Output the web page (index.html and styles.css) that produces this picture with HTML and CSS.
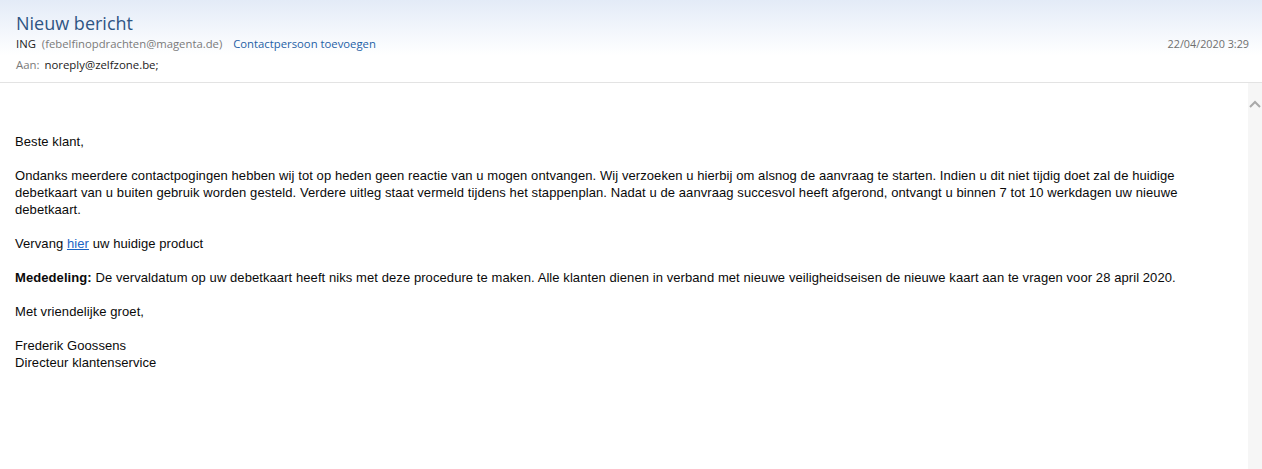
FILE: index.html
```html
<!DOCTYPE html>
<html lang="nl">
<head>
<meta charset="utf-8">
<title>Nieuw bericht</title>
<link rel="stylesheet" href="styles.css">
</head>
<body>
<div class="window">
  <header class="head">
    <h1 class="subject">Nieuw bericht</h1>
    <div class="from-row">
      <div class="from">
        <span class="sender">ING</span>
        <span class="addr">(febelfinopdrachten@magenta.de)</span>
        <a class="add-contact" href="#">Contactpersoon toevoegen</a>
      </div>
      <span class="date">22/04/2020 3:29</span>
    </div>
    <div class="to-row"><span class="label">Aan:</span> <span class="to">noreply@zelfzone.be;</span></div>
  </header>
  <div class="content">
    <main class="body">
      <p>Beste klant,</p>
      <p>Ondanks meerdere contactpogingen hebben wij tot op heden geen reactie van u mogen ontvangen. Wij verzoeken u hierbij om alsnog de aanvraag te starten. Indien u dit niet tijdig doet zal de huidige debetkaart van u buiten gebruik worden gesteld. Verdere uitleg staat vermeld tijdens het stappenplan. Nadat u de aanvraag succesvol heeft afgerond, ontvangt u binnen 7 tot 10 werkdagen uw nieuwe debetkaart.</p>
      <p>Vervang <a href="#">hier</a> uw huidige product</p>
      <p><b>Mededeling:</b> De vervaldatum op uw debetkaart heeft niks met deze procedure te maken. Alle klanten dienen in verband met nieuwe veiligheidseisen de nieuwe kaart aan te vragen voor 28 april 2020.</p>
      <p>Met vriendelijke groet,</p>
      <p>Frederik Goossens<br>Directeur klantenservice</p>
    </main>
    <div class="scrollbar">
      <svg class="chev" width="12" height="8" viewBox="0 0 12 8"><path d="M1 7 L6 2 L11 7" fill="none" stroke="#a9a9a9" stroke-width="2"/></svg>
    </div>
  </div>
</div>
</body>
</html>
```

FILE: styles.css
```css
html, body { margin: 0; padding: 0; background: #fff; }
body { width: 1262px; height: 469px; overflow: hidden; font-family: "Liberation Sans", Arial, sans-serif; }
.window { display: flex; flex-direction: column; height: 469px; }
.head {
  background: linear-gradient(to bottom, #e3ebf7 0px, #f2f6fc 30px, #ffffff 55px, #ffffff 100%);
  padding: 11px 13px 0 16px;
  height: 83px;
  box-sizing: border-box;
  border-bottom: 1px solid #e3e3e3;
}
.subject { margin: 0; font-family: "Open Sans", sans-serif; font-weight: 400; font-size: 18px; line-height: 24px; color: #2f5584; }
.from-row { display: flex; justify-content: space-between; align-items: baseline; font-family: "Open Sans", sans-serif; font-size: 11.3px; line-height: 16px; margin-top: 1px; }
.sender { color: #222; margin-right: 3px; }
.addr { color: #7a7a7a; margin-right: 8px; }
.add-contact { color: #1f5fa6; text-decoration: none; }
.date { color: #6f6f6f; font-size: 10.8px; }
.to-row { font-family: "Open Sans", sans-serif; font-size: 11.4px; line-height: 16px; margin-top: 5px; }
.label { color: #7a7a7a; margin-right: 2px; }
.to { color: #222; }
.content { flex: 1; display: flex; margin-left: 8px; }
.body { flex: 1; padding: 50px 14px 0 7px; font-family: "Liberation Sans", Arial, sans-serif; font-size: 13px; letter-spacing: 0.08px; line-height: 17px; color: #0a0a0a; }
.body p { margin: 0 0 17px 0; }
.body a { color: #1a64c4; text-decoration: underline; }
.scrollbar { width: 14px; background: #f6f6f6; display: flex; justify-content: center; padding-top: 17px; box-sizing: border-box; }
.chev { display: block; }
```
